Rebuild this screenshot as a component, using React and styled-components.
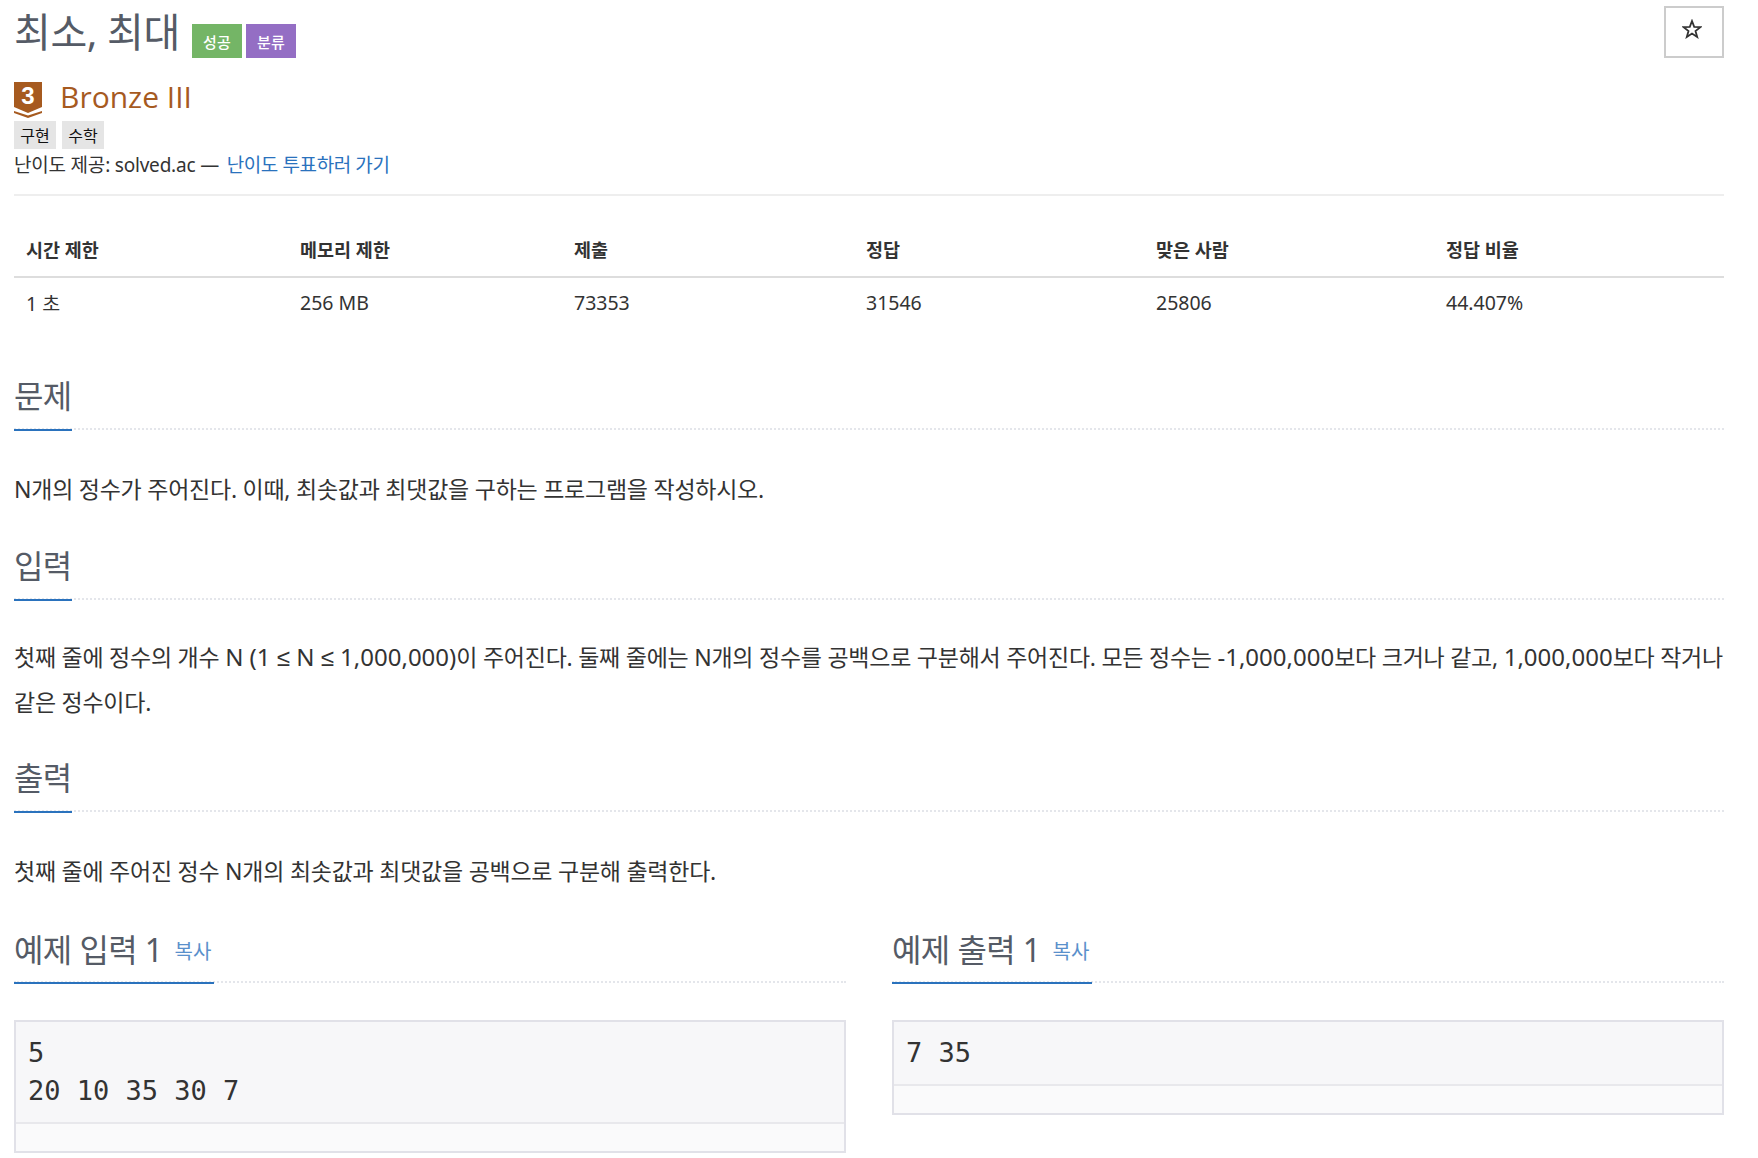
import React from "react";
import styled, { createGlobalStyle } from "styled-components";

const KR = `"Noto Sans", "Noto Sans CJK KR", sans-serif`;

const GlobalStyle = createGlobalStyle`
  html, body {
    margin: 0;
    padding: 0;
    background: #fff;
  }
  body {
    font-family: ${KR};
    color: #333;
  }
`;

const Page = styled.div`
  width: 1710px;
  height: 1158px;
  padding: 0 34px 0 14px;
  overflow: hidden;
`;

const TitleRow = styled.div`
  display: flex;
  align-items: flex-start;
  justify-content: space-between;
  height: 82px;
`;

const TitleLeft = styled.div`
  display: flex;
  align-items: flex-start;
`;

const Title = styled.h1`
  margin: 6px 12px 0 0;
  font-size: 40px;
  line-height: 52px;
  font-weight: 400;
  color: #555b66;
  letter-spacing: -0.4px;
`;

const Label = styled.span`
  display: flex;
  align-items: center;
  justify-content: center;
  width: 50px;
  height: 34px;
  margin: 24px 4px 0 0;
  background: ${(p) => p.$bg};
  color: #fff;
  font-size: 15px;
  font-weight: 500;
`;

const StarButton = styled.div`
  display: flex;
  align-items: center;
  justify-content: center;
  box-sizing: border-box;
  width: 60px;
  height: 52px;
  margin-top: 6px;
  padding: 0 4px 6px 0;
  border: 2px solid #ccc;
  color: #333;
`;

const TierRow = styled.div`
  display: flex;
  align-items: center;
  gap: 18px;
  height: 36px;
`;

const TierName = styled.span`
  padding-bottom: 6px;
  font-family: "Open Sans", sans-serif;
  font-size: 30px;
  line-height: 36px;
  color: #a65a1f;
`;

const Tags = styled.div`
  display: flex;
  gap: 6px;
  margin-top: 3px;
`;

const Tag = styled.span`
  display: flex;
  align-items: center;
  justify-content: center;
  width: 42px;
  height: 28px;
  background: #e5e5e5;
  color: #111;
  font-size: 16px;
`;

const Credit = styled.div`
  margin-top: 1px;
  font-size: 19px;
  line-height: 30px;
  color: #333;
  letter-spacing: -0.2px;
`;

const Link = styled.a`
  margin-left: 3px;
  color: #2a72bd;
  text-decoration: none;
  letter-spacing: -0.4px;
`;

const Divider = styled.hr`
  margin: 14px 0 0;
  border: 0;
  border-top: 2px solid #eee;
`;

const InfoTable = styled.table`
  width: 100%;
  margin-top: 27px;
  border-collapse: collapse;
  table-layout: fixed;
  font-size: 19.5px;
`;

const Th = styled.th`
  box-sizing: border-box;
  width: ${(p) => p.$w}px;
  height: 54px;
  padding: 0 0 2px 12px;
  border-bottom: 2px solid #ddd;
  text-align: left;
  font-weight: 700;
  font-size: 18.5px;
  color: #333;
`;

const Td = styled.td`
  height: 48px;
  padding: 0 0 0 12px;
  color: #333;
`;

const Section = styled.section`
  margin-top: ${(p) => p.$top}px;
`;

const Headline = styled.div`
  display: flex;
  align-items: flex-start;
  height: ${(p) => p.$h}px;
  border-bottom: 2px dotted #e4e6eb;
`;

const HeadlineTitle = styled.h2`
  display: flex;
  align-items: flex-start;
  gap: 12px;
  box-sizing: border-box;
  height: ${(p) => p.$h + 3}px;
  margin: 0;
  padding-top: ${(p) => (p.$large ? 1 : 3)}px;
  border-bottom: 2px solid #2a72bd;
  font-size: 32px;
  line-height: 46px;
  font-weight: 400;
  color: #555b66;
  letter-spacing: -0.6px;
`;

const Copy = styled.a`
  padding-right: 3px;
  font-size: 20px;
  line-height: 50px;
  color: #5a90cb;
  letter-spacing: 0;
`;

const Body = styled.p`
  margin: ${(p) => p.$top}px 0 0;
  font-size: 23px;
  line-height: 44px;
  color: #333;
  letter-spacing: -0.25px;
`;

const Latin = styled.span`
  font-size: 24px;
  letter-spacing: 0;
`;

const Sym = styled.span`
  font-family: "Liberation Sans", sans-serif;
`;

const Samples = styled.div`
  display: grid;
  grid-template-columns: 832px 832px;
  justify-content: space-between;
  margin-top: 33px;
`;

const SampleBox = styled.div`
  margin-top: 37px;
  border: 2px solid #e1e1e8;
  background: #f7f7f9;
`;

const Code = styled.pre`
  margin: 0;
  padding: 12px;
  font-family: "DejaVu Sans Mono", monospace;
  font-size: 27px;
  line-height: 38px;
  color: #333;
`;

const CodeFooter = styled.div`
  height: 27px;
  border-top: 2px solid #e8e8ec;
  background: #fafafb;
`;

const BronzeIcon = () => (
  <svg width="28" height="36" viewBox="0 0 28 36">
    <path d="M0 0H28V25L14 31L0 25Z" fill="#a65a1f" />
    <path d="M0 29L14 33.5L28 29V31L14 36L0 31Z" fill="#a65a1f" />
    <text x="14" y="22" textAnchor="middle" fontFamily="Liberation Sans" fontWeight="700" fontSize="24" fill="#fff">3</text>
  </svg>
);

const StarIcon = () => (
  <svg width="20" height="20" viewBox="0 0 20 20">
    <path d="M10 2L12.2 7.8L18.4 8.1L13.5 12L15.2 18L10 14.6L4.8 18L6.5 12L1.6 8.1L7.8 7.8Z" fill="none" stroke="#333" strokeWidth="1.8" />
  </svg>
);

const Sample = ({ title, code }) => (
  <div>
    <Headline $h={55}>
      <HeadlineTitle $h={55} $large>
        {title}
        <Copy>복사</Copy>
      </HeadlineTitle>
    </Headline>
    <SampleBox>
      <Code>{code}</Code>
      <CodeFooter />
    </SampleBox>
  </div>
);

const Heading = ({ children }) => (
  <Headline $h={58}>
    <HeadlineTitle $h={58}>{children}</HeadlineTitle>
  </Headline>
);

export default function App() {
  const widths = [274, 274, 292, 290, 290, 290];
  const heads = ["시간 제한", "메모리 제한", "제출", "정답", "맞은 사람", "정답 비율"];
  const cells = ["1 초", "256 MB", "73353", "31546", "25806", "44.407%"];

  return (
    <Page>
      <GlobalStyle />
      <TitleRow>
        <TitleLeft>
          <Title>최소, 최대</Title>
          <Label $bg="#74b566">성공</Label>
          <Label $bg="#946ec4">분류</Label>
        </TitleLeft>
        <StarButton>
          <StarIcon />
        </StarButton>
      </TitleRow>
      <TierRow>
        <BronzeIcon />
        <TierName>Bronze III</TierName>
      </TierRow>
      <Tags>
        <Tag>구현</Tag>
        <Tag>수학</Tag>
      </Tags>
      <Credit>
        난이도 제공: solved.ac — <Link>난이도 투표하러 가기</Link>
      </Credit>
      <Divider />
      <InfoTable>
        <thead>
          <tr>
            {heads.map((h, i) => (
              <Th key={h} $w={widths[i]}>{h}</Th>
            ))}
          </tr>
        </thead>
        <tbody>
          <tr>
            {cells.map((c) => (
              <Td key={c}>{c}</Td>
            ))}
          </tr>
        </tbody>
      </InfoTable>
      <Section $top={44}>
        <Heading>문제</Heading>
        <Body $top={37}>N개의 정수가 주어진다. 이때, 최솟값과 최댓값을 구하는 프로그램을 작성하시오.</Body>
      </Section>
      <Section $top={29}>
        <Heading>입력</Heading>
        <Body $top={35}>
          첫째 줄에 정수의 개수 <Latin>N (1 <Sym>≤</Sym> N <Sym>≤</Sym> 1,000,000)</Latin>이 주어진다. 둘째 줄에는 N개의 정수를 공백으로 구분해서 주어진다. 모든 정수는 <Latin>-1,000,000</Latin>보다 크거나 같고, <Latin>1,000,000</Latin>보다 작거나<br />
          같은 정수이다.
        </Body>
      </Section>
      <Section $top={28}>
        <Heading>출력</Heading>
        <Body $top={37}>첫째 줄에 주어진 정수 N개의 최솟값과 최댓값을 공백으로 구분해 출력한다.</Body>
      </Section>
      <Samples>
        <Sample title="예제 입력 1" code={"5\n20 10 35 30 7"} />
        <Sample title="예제 출력 1" code="7 35" />
      </Samples>
    </Page>
  );
}
